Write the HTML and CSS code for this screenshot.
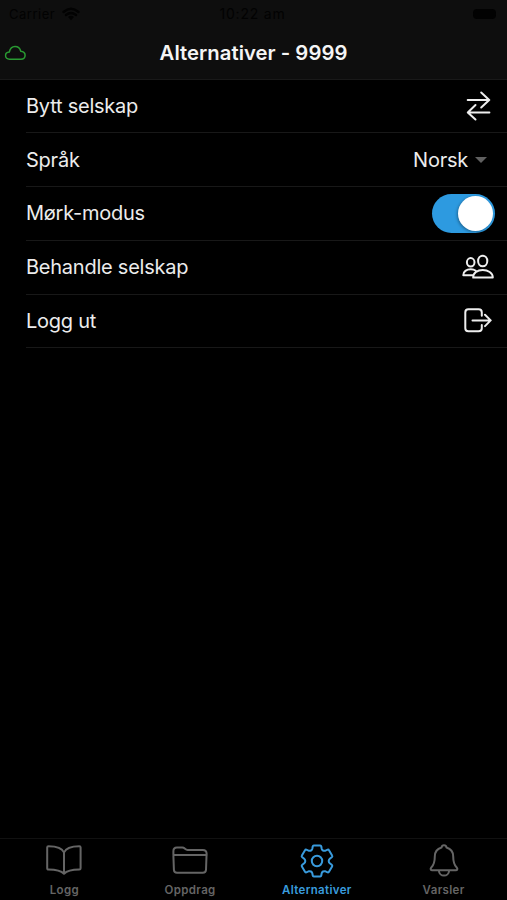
FILE: index.html
```html
<!DOCTYPE html>
<html lang="no">
<head>
<meta charset="utf-8">
<title>Alternativer</title>
<link rel="stylesheet" href="styles.css">
</head>
<body>
<div class="app">
  <header class="header">
    <div class="status">
      <span class="carrier"><span class="carrier-name">Carrier</span>
        <svg width="18" height="14" viewBox="0 0 18 14"><path d="M1.5 5Q9-1.5 16.5 5M4 8q5-4 10 0" fill="none" stroke="currentColor" stroke-width="2.4"/><path d="M6 10q3-2.4 6 0l-3 3.3Z" fill="currentColor"/></svg>
      </span>
      <span class="clock">10:22 am</span>
      <span class="battery"></span>
    </div>
    <div class="titlebar">
      <svg class="cloud" width="22" height="16" viewBox="0 0 22 16"><path d="M5 14.2C2.7 14.2 1 12.8 1 10.6 1 8.4 2.6 7.2 4.8 7 5.5 3.7 7.6 1.4 10.5 1.4c3 0 5 1.7 5.7 4.8 2.8.3 4.4 1.7 4.4 4 0 2.5-1.8 4-4.3 4Z"/></svg>
      <h1 class="title">Alternativer - 9999</h1>
    </div>
  </header>
  <main class="list">
    <div class="row"><span class="label">Bytt selskap</span>
      <svg class="icon swap" width="25" height="30" viewBox="0 0 25 30"><path d="M1.7 9h21.6M15.2 1.5l8 7.5-8 7.5M23.4 21.5H2M9.5 14l-7.7 7.5 7.7 7"/></svg>
    </div>
    <div class="row"><span class="label">Språk</span>
      <span class="select"><span class="label">Norsk</span><span class="caret"></span></span>
    </div>
    <div class="row"><span class="label">Mørk-modus</span><span class="toggle"><span class="knob"></span></span></div>
    <div class="row"><span class="label">Behandle selskap</span>
      <svg class="icon people" width="32" height="26" viewBox="0 0 32 26"><ellipse cx="20.7" cy="7" rx="4.6" ry="5.3"/><ellipse cx="8.7" cy="8.3" rx="3.8" ry="4.2"/><path d="M11.2 23.6C11 18.8 15.5 16 20.7 16S30.8 18.8 30.8 23.6ZM10.5 21.3H1.3c-.2-3.8 3.3-6 7.5-6 2 0 3.7.5 5 1.4"/></svg>
    </div>
    <div class="row"><span class="label">Logg ut</span>
      <svg class="icon logout" width="28" height="25" viewBox="0 0 28 25"><path d="M17.8 7.7V4.4c0-2-1.2-3.1-3.2-3.1H4.4c-2 0-3.1 1.1-3.1 3.1v15.8c0 2 1.1 3.1 3.1 3.1h10.2c2 0 3.2-1.1 3.2-3.1V17M8.5 12.4h18M21 6.7l5.7 5.7-5.7 5.7"/></svg>
    </div>
  </main>
  <nav class="tabs">
    <a class="tab book"><svg width="36" height="33" viewBox="0 0 36 33"><path d="M18 29.2C15 26 9 25 2.5 25 1.6 25 1.2 24.6 1.2 23.8V3c0-.8.5-1.3 1.3-1.3C10 1.7 16 3 18 8 20 3 26 1.7 33.3 1.7c.8 0 1.3.5 1.3 1.3v20.8c0 .8-.4 1.2-1.3 1.2C27 25 21 26 18 29.2ZM18 8v21"/></svg><span>Logg</span></a>
    <a class="tab"><svg width="36" height="33" viewBox="0 0 36 33"><path d="M1.4 10.7V6.5C1.4 4 2.6 3 4.9 3h5.3c2.8 0 2.8 2.4 5.4 2.4h15.2c2.4 0 3.8 1.3 3.8 3.7v2M1.4 11.5c0-.6.3-.9.9-.9h31.4c.6 0 .8.3.8.9l-.5 13.7c-.1 2-1.3 3-3.2 3H5c-2 0-3-1-3.1-3Z"/></svg><span>Oppdrag</span></a>
    <a class="tab active"><svg width="34" height="34" viewBox="-17 -17 34 34"><circle r="5.2"/><path d="M-3.2-15.5H3.2Q4.1-15.5 4.2-14.7L4.7-12.2Q5-11 6-10.5T8-10.2L10.6-11.3Q11.6-11.6 12-10.8L15.1-5.5Q15.6-4.7 15-4.1L12.8-2.3Q11.7-1.3 11.7 0T12.8 2.3L15 4.1Q15.6 4.7 15.1 5.5L12 10.8Q11.6 11.6 10.6 11.3L8 10.2Q7 10 6 10.5T4.7 12.2L4.2 14.7Q4.1 15.5 3.2 15.5H-3.2Q-4.1 15.5-4.2 14.7L-4.7 12.2Q-5 11-6 10.5T-8 10.2L-10.6 11.3Q-11.6 11.6-12 10.8L-15.1 5.5Q-15.6 4.7-15 4.1L-12.8 2.3Q-11.7 1.3-11.7 0T-12.8-2.3L-15-4.1Q-15.6-4.7-15.1-5.5L-12-10.8Q-11.6-11.6-10.6-11.3L-8-10.2Q-7-10-6-10.5T-4.7-12.2L-4.2-14.7Q-4.1-15.5-3.2-15.5Z"/></svg><span>Alternativer</span></a>
    <a class="tab"><svg width="30" height="34" viewBox="0 0 30 34"><path d="M12.5 3.5C13 .4 17 .4 17.5 3.5 22 4.8 24.2 8 24.2 12.5c0 6 1 8.5 3.5 11 1.2 1.3.7 2.8-1 2.8H3.3c-1.7 0-2.2-1.5-1-2.8 2.5-2.5 3.5-5 3.5-11C5.8 8 8 4.8 12.5 3.5ZM9.8 26.5c.5 6.8 9.9 6.8 10.4 0"/></svg><span>Varsler</span></a>
  </nav>
</div>
</body>
</html>
```
FILE: styles.css
```css
* { box-sizing: border-box; }
body { margin: 0; background: #000; color: #ececec; font-family: Inter, "Liberation Sans", sans-serif; }
.app { width: 507px; height: 900px; display: flex; flex-direction: column; overflow: hidden; }
svg { display: block; flex: none; fill: none; stroke: currentColor; stroke-linecap: round; stroke-linejoin: round; }
.header { height: 79.5px; flex: none; background: #0e0e0e; border-bottom: 1px solid #191919; }
.status { height: 27px; padding: 0 11px 0 9px; display: grid; grid-template-columns: 1fr auto 1fr; align-items: center; color: #020202; font-size: 13px; }
.carrier { display: flex; align-items: center; gap: 7px; }
.carrier svg { stroke: none; }
.carrier-name { letter-spacing: .5px; }
.clock { font-size: 14px; letter-spacing: .8px; }
.battery { justify-self: end; width: 23px; height: 10px; border-radius: 4px; background: #020202; }
.titlebar { height: 51px; display: grid; grid-template-columns: 22px 1fr 22px; align-items: center; padding: 0 5px; }
.cloud { color: #299a32; stroke-width: 1.5; transform: translateX(-.5px); }
.title { margin: 0; font-size: 20.3px; font-weight: 600; line-height: 26px; text-align: center; color: #f5f5f5; letter-spacing: .03px; }
.list { flex: 1; padding-left: 26px; }
.row { height: 53.75px; display: flex; align-items: center; justify-content: space-between; border-bottom: 1px solid #181818; padding-right: 13px; }
.label { font-size: 20px; line-height: 26px; letter-spacing: -.24px; white-space: nowrap; }
.icon { stroke-width: 2; color: #eee; }
.swap { margin-right: 3px; }
.logout { margin-right: 2px; }
.select { display: flex; align-items: center; gap: 7px; padding-right: 7px; }
.caret { border: 6px solid transparent; border-top-color: #606060; border-bottom: 0; }
.toggle { width: 63px; height: 39px; border-radius: 20px; padding: 2px; background: #2d9ae0; display: flex; justify-content: flex-end; margin-right: -1px; }
.knob { width: 35px; height: 35px; border-radius: 50%; background: #fff; box-shadow: -1px 1px 3px #0005; }
.tabs { height: 62px; flex: none; border-top: 1px solid #111; display: grid; grid-template-columns: repeat(4, 1fr); }
.tab { display: flex; flex-direction: column; align-items: center; padding-top: 5px; color: #656565; font-size: 11.5px; font-weight: 600; line-height: 14px; letter-spacing: .35px; }
.book { padding-left: 2px; }
.tab svg { height: 34px; stroke-width: 2; }
.tab span { margin-top: 5px; }
.tab.active { color: #399bdd; }
```
